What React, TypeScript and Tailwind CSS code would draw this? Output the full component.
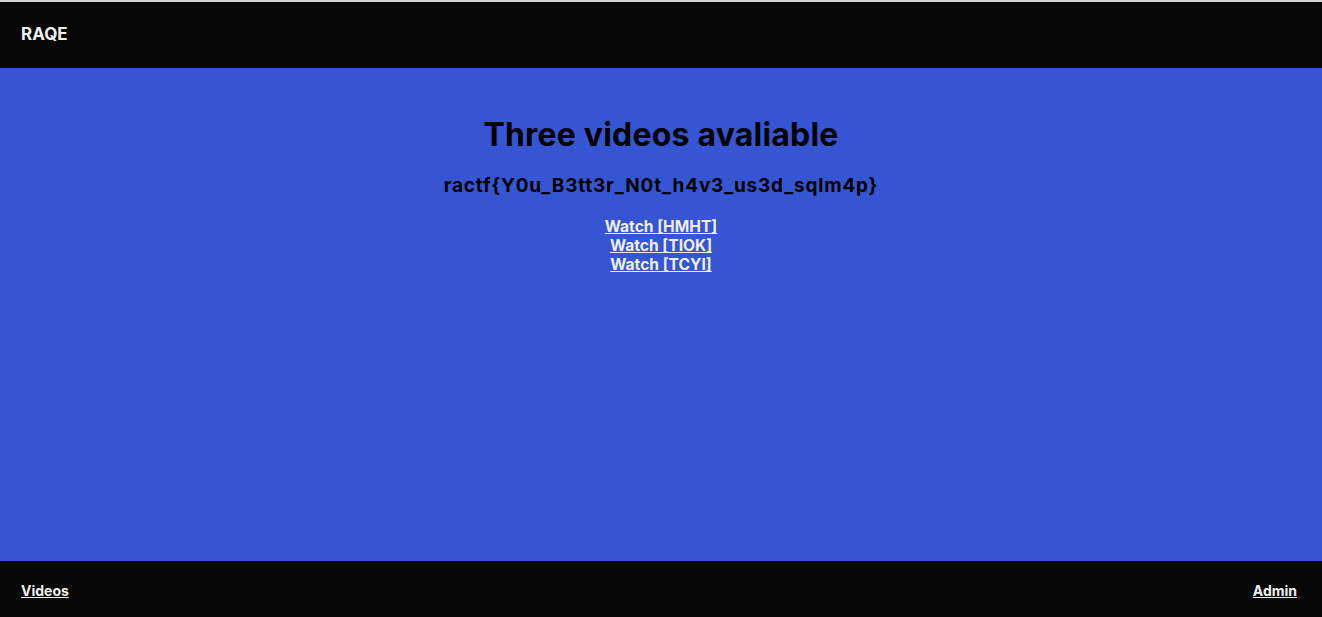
export default function App() {
  return (
    <div className="flex h-[617px] flex-col border-t-2 border-[#d4d4d4] bg-[#3555d3] font-['Inter',sans-serif]">
      <header className="flex h-[66px] shrink-0 items-center bg-[#080808] px-[21px]">
        <span className="text-[17px] font-bold text-[#eeeeee]">RAQE</span>
      </header>

      <main className="flex flex-1 flex-col items-center pt-[48px] text-center">
        <h1 className="text-[32px] font-bold leading-[38px] tracking-[0.2px] text-black">Three videos avaliable</h1>
        <h3 className="mt-[21px] text-[19px] font-bold leading-[22px] tracking-[0.8px] text-black">
          ractf{"{"}Y0u_B3tt3r_N0t_h4v3_us3d_sqlm4p{"}"}
        </h3>
        <div className="mt-[20px] flex flex-col items-center text-[15.6px] font-bold leading-[19px] text-[#eeeeee]">
          <a href="#" className="underline">Watch [HMHT]</a>
          <a href="#" className="underline">Watch [TIOK]</a>
          <a href="#" className="underline">Watch [TCYI]</a>
        </div>
      </main>

      <footer className="flex h-[56px] shrink-0 items-center justify-between bg-[#080808] pl-[21px] pr-[25px] pt-[3px]">
        <a href="#" className="text-[14px] font-bold text-[#eeeeee] underline">Videos</a>
        <a href="#" className="text-[14px] font-bold text-[#eeeeee] underline">Admin</a>
      </footer>
    </div>
  );
}
